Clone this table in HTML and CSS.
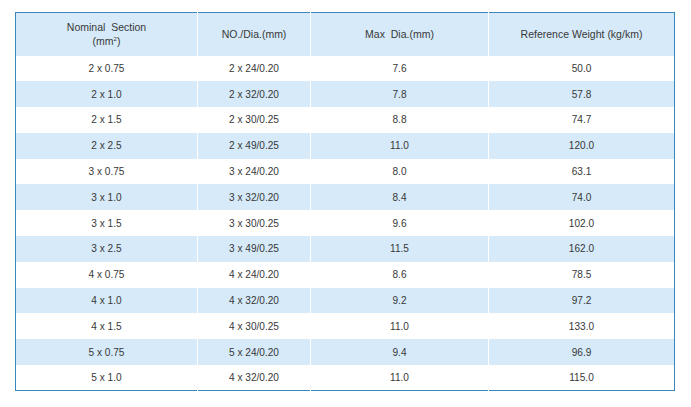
FILE: index.html
```html
<!DOCTYPE html>
<html>
<head>
<meta charset="utf-8">
<link rel="stylesheet" href="styles.css">
</head>
<body>
<div class="page">
<table class="spec">
<colgroup>
<col class="c1"><col class="c2"><col class="c3"><col class="c4">
</colgroup>
<thead>
<tr><th>Nominal&nbsp; Section<br>(mm<sup>2</sup>)</th><th>NO./Dia.(mm)</th><th>Max&nbsp; Dia.(mm)</th><th>Reference Weight (kg/km)</th></tr>
</thead>
<tbody>
<tr><td>2 x 0.75</td><td>2 x 24/0.20</td><td>7.6</td><td>50.0</td></tr>
<tr><td>2 x 1.0</td><td>2 x 32/0.20</td><td>7.8</td><td>57.8</td></tr>
<tr><td>2 x 1.5</td><td>2 x 30/0.25</td><td>8.8</td><td>74.7</td></tr>
<tr><td>2 x 2.5</td><td>2 x 49/0.25</td><td>11.0</td><td>120.0</td></tr>
<tr><td>3 x 0.75</td><td>3 x 24/0.20</td><td>8.0</td><td>63.1</td></tr>
<tr><td>3 x 1.0</td><td>3 x 32/0.20</td><td>8.4</td><td>74.0</td></tr>
<tr><td>3 x 1.5</td><td>3 x 30/0.25</td><td>9.6</td><td>102.0</td></tr>
<tr><td>3 x 2.5</td><td>3 x 49/0.25</td><td>11.5</td><td>162.0</td></tr>
<tr><td>4 x 0.75</td><td>4 x 24/0.20</td><td>8.6</td><td>78.5</td></tr>
<tr><td>4 x 1.0</td><td>4 x 32/0.20</td><td>9.2</td><td>97.2</td></tr>
<tr><td>4 x 1.5</td><td>4 x 30/0.25</td><td>11.0</td><td>133.0</td></tr>
<tr><td>5 x 0.75</td><td>5 x 24/0.20</td><td>9.4</td><td>96.9</td></tr>
<tr><td>5 x 1.0</td><td>4 x 32/0.20</td><td>11.0</td><td>115.0</td></tr>
</tbody>
</table>
</div>
</body>
</html>
```
FILE: styles.css
```css
html, body {
  margin: 0;
  padding: 0;
  background: #ffffff;
}
.page {
  padding: 12px 0 0 15px;
}
.spec {
  border-collapse: collapse;
  table-layout: fixed;
  width: 660px;
  border: 1px solid #3a87bb;
  font-family: "Liberation Sans", Arial, sans-serif;
  font-size: 10.5px;
  color: #383838;
}
.c1 { width: 182px; }
.c2 { width: 113px; }
.c3 { width: 178px; }
.c4 { width: 186px; }
.spec th, .spec td {
  text-align: center;
  padding: 0;
  border-left: 1px solid #ffffff;
  font-weight: normal;
}
.spec td {
  font-size: 10.1px;
}
.spec th:first-child, .spec td:first-child {
  border-left: none;
}
.spec thead tr {
  height: 43px;
  background: #d6eaf9;
}
.spec th {
  line-height: 14px;
}
.spec sup {
  font-size: 6px;
  line-height: 0;
  vertical-align: 4px;
}
.spec tbody tr {
  height: 25.8px;
}
.spec tbody tr:nth-child(even) {
  background: #d6eaf9;
}
```
